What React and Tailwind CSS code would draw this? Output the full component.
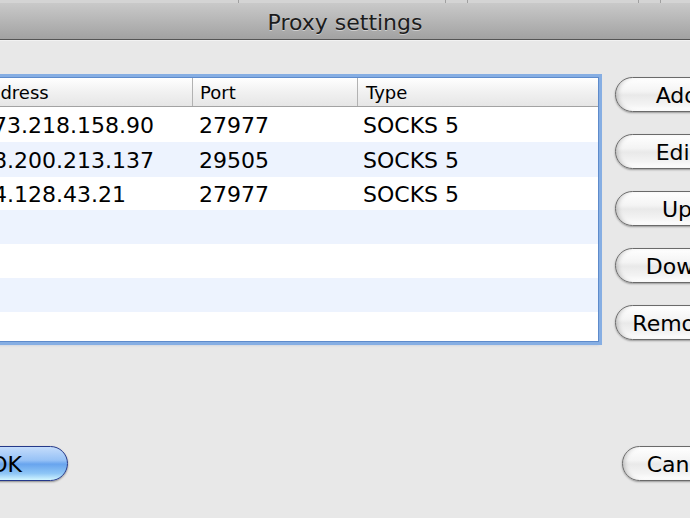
import React from "react";

const rows = [
  { a: "173.218.158.90", p: "27977", t: "SOCKS 5", h: "h-[35px]", bg: "bg-white" },
  { a: "68.200.213.137", p: "29505", t: "SOCKS 5", h: "h-[35px]", bg: "bg-[#edf3fe]" },
  { a: "24.128.43.21", p: "27977", t: "SOCKS 5", h: "h-[33px]", bg: "bg-white" },
  { a: "", p: "", t: "", h: "h-[34px]", bg: "bg-[#edf3fe]" },
  { a: "", p: "", t: "", h: "h-[34px]", bg: "bg-white" },
  { a: "", p: "", t: "", h: "h-[34px]", bg: "bg-[#edf3fe]" },
  { a: "", p: "", t: "", h: "h-[34px]", bg: "bg-white" },
];

function GrayButton({ children }) {
  return (
    <div className="w-[124px] h-[35px] shrink-0 rounded-full border border-[#6a6a6a] bg-[linear-gradient(to_bottom,#ffffff_0%,#f4f4f4_40%,#e9e9e9_52%,#f3f3f3_80%,#ffffff_100%)] shadow-[0_1px_2px_rgba(0,0,0,0.35),inset_4px_0_5px_-3px_rgba(0,0,0,0.25)] flex items-center justify-center text-[22px] text-black leading-none pt-[2px]">
      {children}
    </div>
  );
}

export default function App() {
  return (
    <div className="w-[690px] h-[518px] overflow-hidden bg-[#e8e8e8] font-['DejaVu_Sans',sans-serif] text-black">
      {/* strip of window behind */}
      <div className="h-[3px] flex bg-[#d4d4d4]">
        <div className="w-[238px]" />
        <div className="w-[207px] border-l border-[#a0a0a0]" />
        <div className="w-[22px] border-l border-[#a0a0a0]" />
        <div className="w-[171px] border-l border-[#a0a0a0]" />
        <div className="w-[22px] border-l border-[#a0a0a0]" />
        <div className="flex-1 border-l border-[#a0a0a0]" />
      </div>
      {/* title bar */}
      <div className="h-[37px] border-b border-[#555555] bg-[linear-gradient(to_bottom,#c9c9c9,#a2a2a2)] flex items-center justify-center pt-[4px]">
        <span className="text-[22px] text-[#1c1c1c] leading-none [text-shadow:0_1px_0_rgba(255,255,255,0.45)]">
          Proxy settings
        </span>
      </div>
      {/* body */}
      <div className="border-t border-[#f2f2f2] pt-[36px]">
        <div className="flex items-start">
          {/* table */}
          <div className="ml-[-35px] w-[634px] shrink-0 border border-[#5e8bcb] shadow-[0_0_0_3px_#86aee3,0_2px_3px_rgba(60,100,170,0.5)] bg-white">
            <div className="h-[29px] flex border-b border-[#a3a3a3] bg-[linear-gradient(to_bottom,#ffffff,#f1f1f1_50%,#e6e6e6)] text-[18px] leading-none">
              <div className="w-[227px] shrink-0 border-r border-[#b2b2b2] flex items-center pl-[11px] pt-[1px]">Address</div>
              <div className="w-[165px] shrink-0 border-r border-[#b2b2b2] flex items-center pl-[7px] pt-[1px]">Port</div>
              <div className="flex-1 flex items-center pl-[8px] pt-[1px]">Type</div>
            </div>
            <div className="h-[234px] overflow-hidden">
              {rows.map((r, i) => (
                <div key={i} className={`${r.h} ${r.bg} flex items-center text-[22px] leading-none pt-[2px]`}>
                  <div className="w-[227px] shrink-0 pl-[13px] whitespace-nowrap">{r.a}</div>
                  <div className="w-[165px] shrink-0 pl-[6px]">{r.p}</div>
                  <div className="flex-1 pl-[5px]">{r.t}</div>
                </div>
              ))}
            </div>
          </div>
          {/* right buttons */}
          <div className="ml-[16px] mt-[0px] flex flex-col gap-[22px]">
            <GrayButton>Add</GrayButton>
            <GrayButton>Edit</GrayButton>
            <GrayButton>Up</GrayButton>
            <GrayButton>Down</GrayButton>
            <GrayButton>Remove</GrayButton>
          </div>
        </div>
        {/* bottom buttons */}
        <div className="ml-[-56px] w-[802px] mt-[104px] flex justify-between">
          <div className="w-[124px] h-[35px] rounded-full border border-[#25398a] bg-[linear-gradient(to_bottom,#c4dcfb_0%,#97c2f6_40%,#68a4ee_52%,#8ec6f6_80%,#d2f6ff_100%)] shadow-[0_1px_2px_rgba(0,0,0,0.4)] flex items-center justify-center text-[22px] leading-none pt-[2px]">
            OK
          </div>
          <GrayButton>Cancel</GrayButton>
        </div>
      </div>
    </div>
  );
}
